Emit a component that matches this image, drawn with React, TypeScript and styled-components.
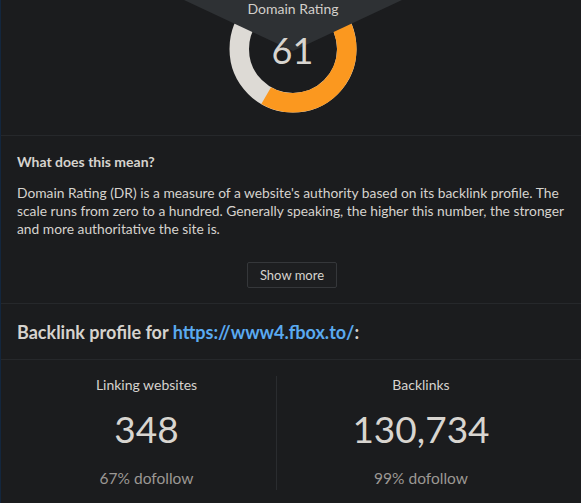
import React from "react";
import styled, { createGlobalStyle } from "styled-components";

const Global = createGlobalStyle`
  html, body { margin: 0; padding: 0; background: #1b1c1e; }
  body { font-family: Lato, "Open Sans", Arial, sans-serif; }
  * { box-sizing: border-box; }
`;

const Page = styled.div`
  position: relative;
  width: 581px;
  height: 503px;
  overflow: hidden;
  background: #1b1c1e;
  border-left: 1px solid #13263d;
  color: #d6d3ce;
  font-family: Lato, "Open Sans", Arial, sans-serif;
`;

const GaugeSection = styled.section`
  position: relative;
  height: 136px;
  border-bottom: 1px solid #26282b;
  display: flex;
  justify-content: center;
  padding-left: 3px;
  overflow: hidden;
`;

const GaugeWrap = styled.div`
  position: relative;
  width: 128px;
  height: 128px;
  margin-top: -15px;
  flex: none;
`;

const GaugeValue = styled.div`
  position: absolute;
  inset: 0;
  z-index: 3;
  display: flex;
  align-items: center;
  justify-content: center;
  font-size: 36px;
  font-weight: 400;
  color: #d8d5d0;
  padding-top: 2px;
`;

const Tooltip = styled.div`
  position: absolute;
  top: 0;
  left: 183px;
  width: 218px;
  height: 51px;
  background: #2e3134;
  clip-path: polygon(0 0, 100% 0, 50% 100%);
  text-align: center;
  font-size: 14px;
  line-height: 16px;
  padding-top: 1px;
  color: #d2cfca;
  z-index: 2;
`;

const InfoSection = styled.section`
  padding: 17px 12px 15px 16px;
  border-bottom: 1px solid #26282b;
  display: flex;
  flex-direction: column;
`;

const Heading = styled.h3`
  margin: 0;
  font-size: 14px;
  line-height: 18px;
  font-weight: 700;
  color: #d6d3ce;
`;

const Paragraph = styled.p`
  margin: 13px 0 0 0;
  font-size: 13.8px;
  line-height: 18px;
  color: #d6d3ce;
`;

const Button = styled.button`
  align-self: center;
  margin-top: 24px;
  margin-left: -2px;
  width: 90px;
  height: 26px;
  background: #1d1e20;
  border: 1px solid #35373a;
  border-radius: 2px;
  color: #d6d3ce;
  font-family: inherit;
  font-size: 13px;
  padding: 0;
`;

const ProfileHeader = styled.h2`
  margin: 0;
  height: 56px;
  display: flex;
  align-items: center;
  padding: 0 16px;
  font-size: 18px;
  font-weight: 700;
  color: #d6d3ce;
  border-bottom: 1px solid #26282b;
  white-space: pre;
`;

const Link = styled.a`
  color: #5aaaf0;
  text-decoration: none;
`;

const Stats = styled.div`
  display: grid;
  grid-template-columns: 259px 1fr;
  padding: 16px 16px 0 16px;
`;

const Stat = styled.div<{ $divider?: boolean }>`
  display: flex;
  flex-direction: column;
  align-items: center;
  height: 114px;
  border-left: ${(p) => (p.$divider ? "1px solid #2a2c2f" : "none")};
`;

const StatLabel = styled.div`
  margin-top: 1px;
  font-size: 14px;
  line-height: 16px;
  color: #d6d3ce;
`;

const StatValue = styled.div`
  margin-top: 15px;
  font-size: 37px;
  line-height: 42px;
  color: #d8d5d0;
`;

const StatSub = styled.div`
  margin-top: 20px;
  font-size: 15.5px;
  line-height: 17px;
  color: #9b9894;
`;

function Donut({ value }: { value: number }) {
  const r = 53.75;
  const c = 2 * Math.PI * r;
  const frac = value / 100;
  const start = -10;
  return (
    <svg width="128" height="128" viewBox="0 0 128 128">
      <circle cx="64" cy="64" r={r} fill="none" stroke="#dddad5" strokeWidth="19.5" />
      <circle
        cx="64"
        cy="64"
        r={r}
        fill="none"
        stroke="#fb981f"
        strokeWidth="19.5"
        strokeDasharray={`${c * frac} ${c}`}
        transform={`rotate(${start - 90} 64 64)`}
      />
    </svg>
  );
}

export default function App() {
  return (
    <>
      <Global />
      <Page>
        <GaugeSection>
          <GaugeWrap>
            <Donut value={61} />
            <GaugeValue>61</GaugeValue>
          </GaugeWrap>
        </GaugeSection>
        <Tooltip>Domain Rating</Tooltip>
        <InfoSection>
          <Heading>What does this mean?</Heading>
          <Paragraph>
            Domain Rating (DR) is a measure of a website's authority based on its backlink profile. The
            scale runs from zero to a hundred. Generally speaking, the higher this number, the stronger
            and more authoritative the site is.
          </Paragraph>
          <Button>Show more</Button>
        </InfoSection>
        <ProfileHeader>
          Backlink profile for <Link href="#">https://www4.fbox.to/</Link>:
        </ProfileHeader>
        <Stats>
          <Stat>
            <StatLabel>Linking websites</StatLabel>
            <StatValue>348</StatValue>
            <StatSub>67% dofollow</StatSub>
          </Stat>
          <Stat $divider>
            <StatLabel>Backlinks</StatLabel>
            <StatValue>130,734</StatValue>
            <StatSub>99% dofollow</StatSub>
          </Stat>
        </Stats>
      </Page>
    </>
  );
}
